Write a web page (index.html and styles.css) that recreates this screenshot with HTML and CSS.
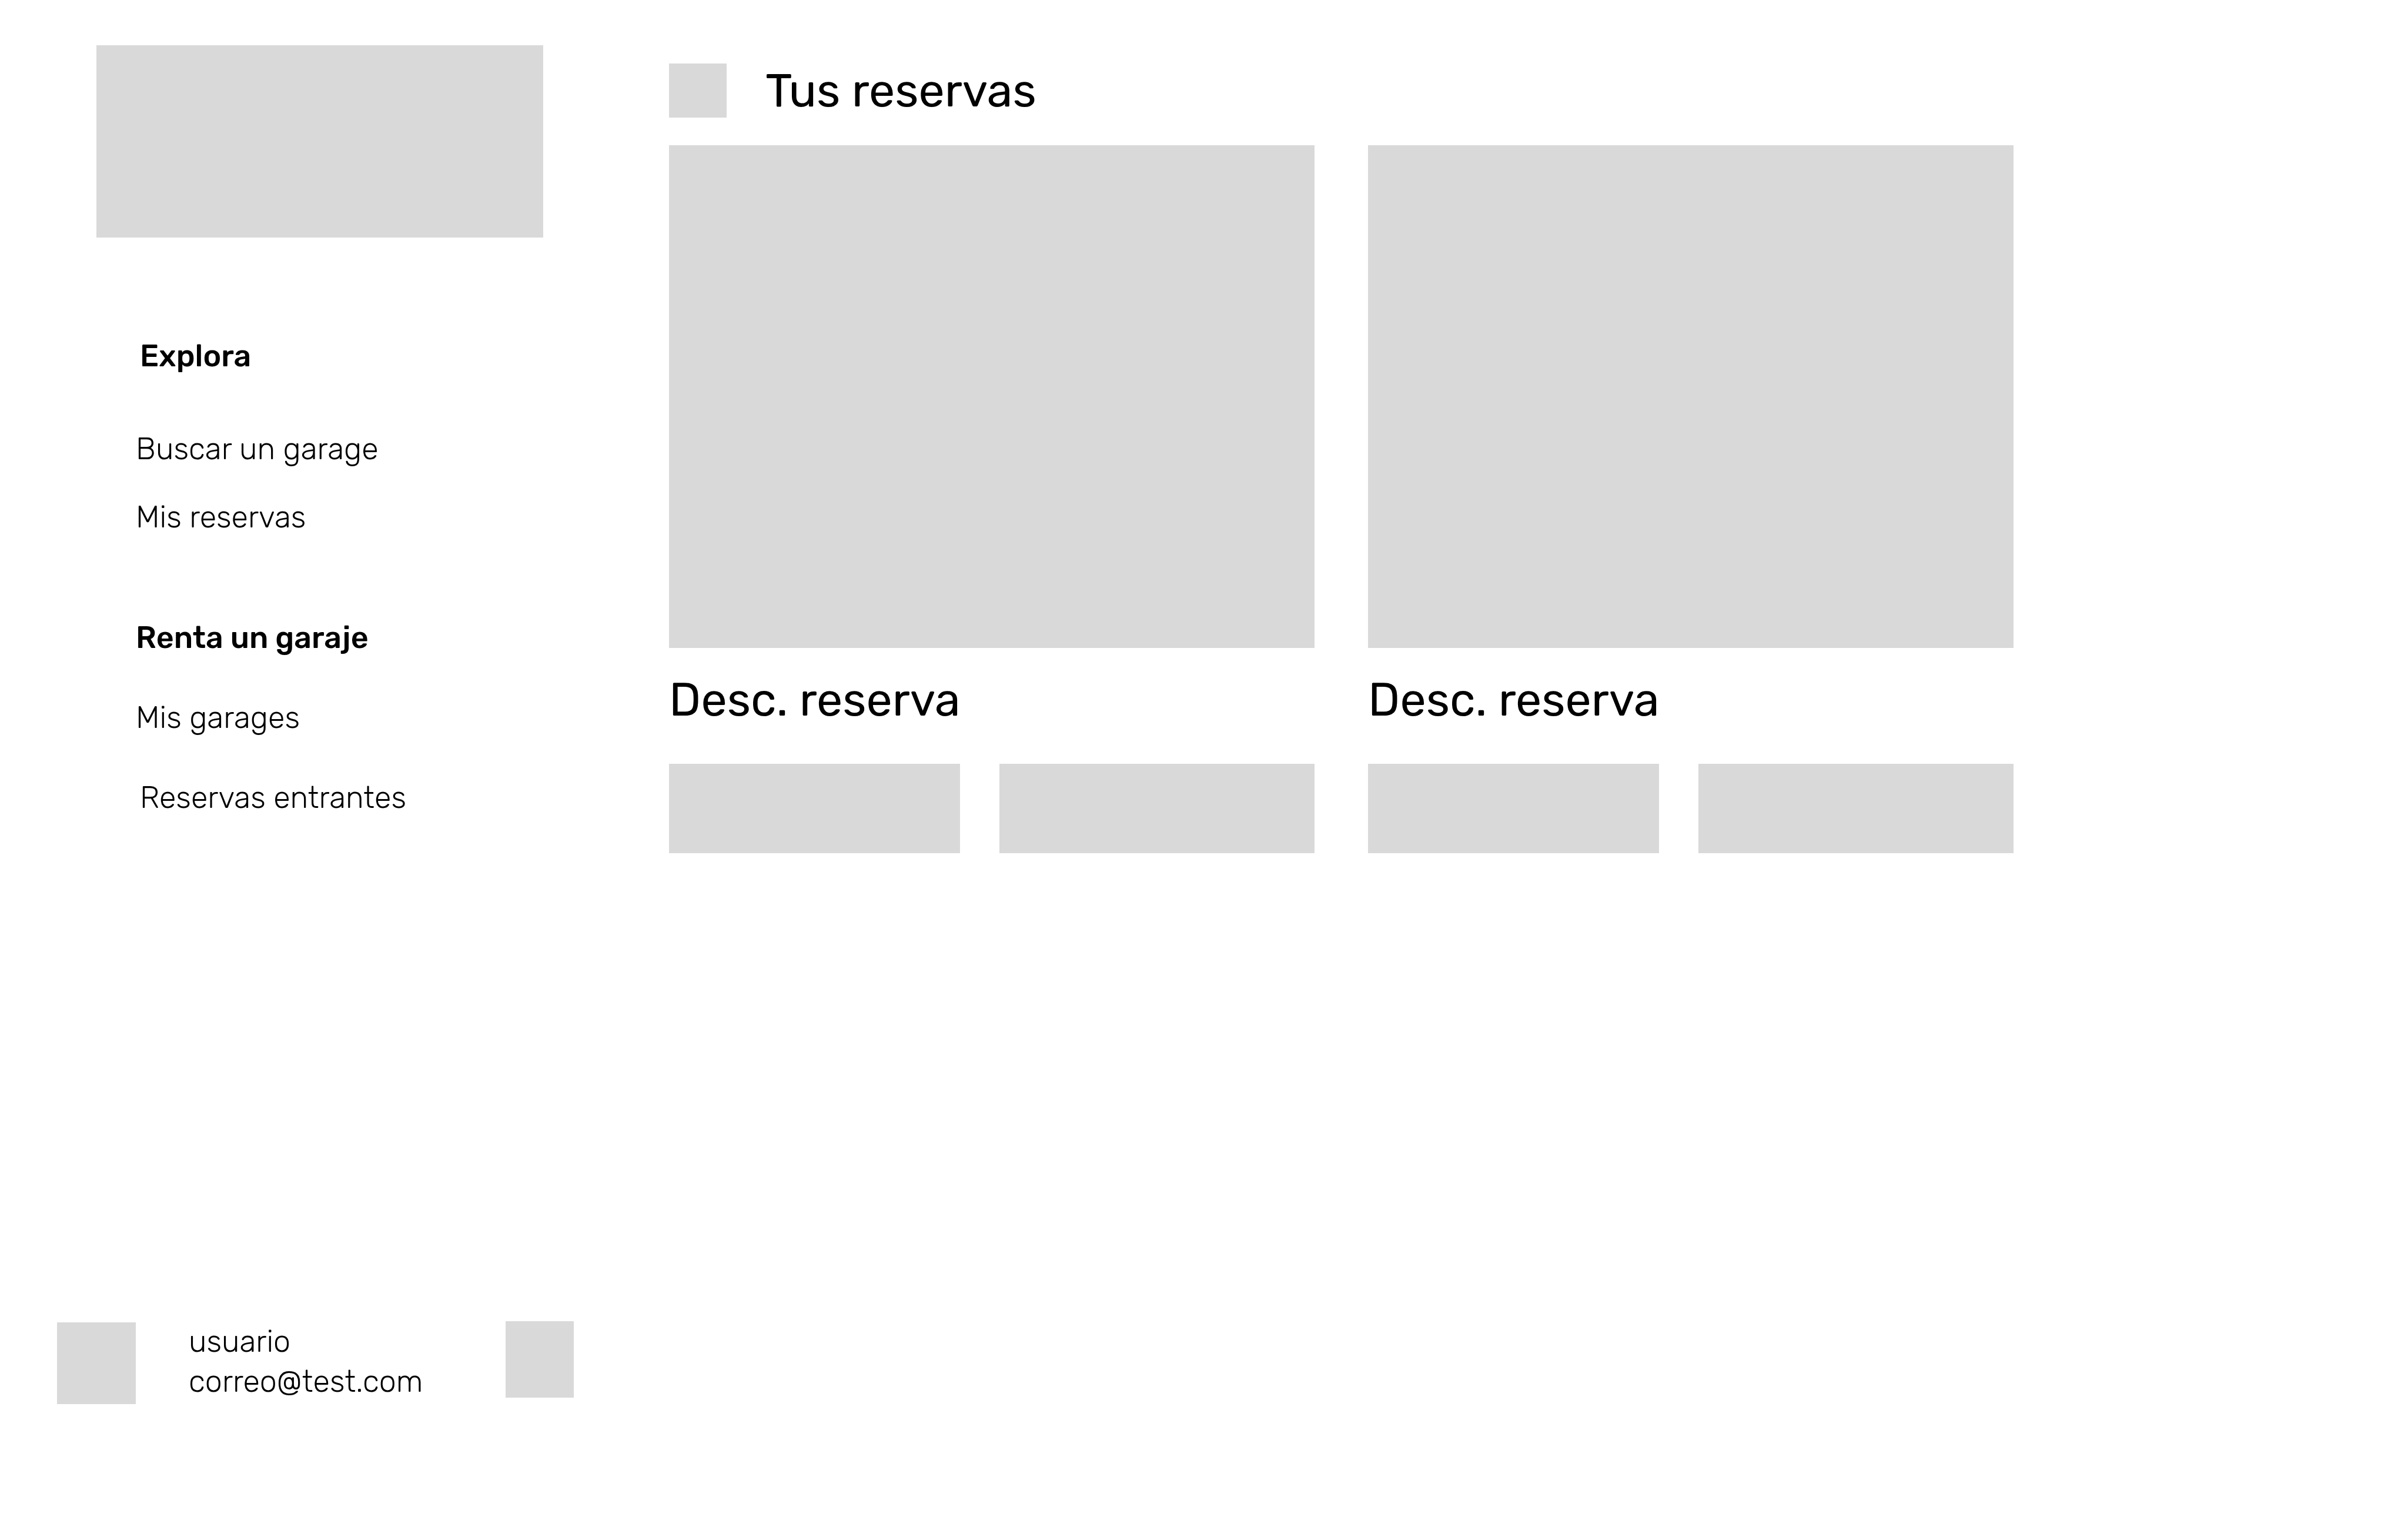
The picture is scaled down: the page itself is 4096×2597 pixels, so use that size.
FILE: index.html
```html
<!DOCTYPE html>
<html lang="es">
<head>
<meta charset="utf-8">
<meta name="viewport" content="width=device-width, initial-scale=1">
<title>Tus reservas</title>
<link rel="stylesheet" href="styles.css">
</head>
<body>
<div class="layout">
  <aside class="sidebar">
    <div class="logo"></div>
    <nav class="menu">
      <section class="menu-group">
        <h2 class="menu-title menu-inset">Explora</h2>
        <ul class="menu-list">
          <li><a class="menu-link" href="#buscar">Buscar un garage</a></li>
          <li><a class="menu-link" href="#reservas">Mis reservas</a></li>
        </ul>
      </section>
      <section class="menu-group menu-group-rent">
        <h2 class="menu-title">Renta un garaje</h2>
        <ul class="menu-list">
          <li><a class="menu-link" href="#garages">Mis garages</a></li>
          <li><a class="menu-link menu-inset" href="#entrantes">Reservas entrantes</a></li>
        </ul>
      </section>
    </nav>
    <footer class="account">
      <div class="avatar"></div>
      <div class="account-text">
        <p class="account-line">usuario</p>
        <p class="account-line">correo@test.com</p>
      </div>
      <button class="account-button" type="button" aria-label="Opciones de la cuenta"></button>
    </footer>
  </aside>
  <main class="content">
    <header class="page-header">
      <div class="page-icon"></div>
      <h1 class="page-title">Tus reservas</h1>
    </header>
    <div class="cards">
      <article class="card">
        <div class="card-photo"></div>
        <h2 class="card-title">Desc. reserva</h2>
        <div class="card-actions">
          <button class="card-button" type="button" aria-label="Ver reserva"></button>
          <button class="card-button" type="button" aria-label="Cancelar reserva"></button>
        </div>
      </article>
      <article class="card">
        <div class="card-photo"></div>
        <h2 class="card-title">Desc. reserva</h2>
        <div class="card-actions">
          <button class="card-button" type="button" aria-label="Ver reserva"></button>
          <button class="card-button" type="button" aria-label="Cancelar reserva"></button>
        </div>
      </article>
    </div>
  </main>
</div>
</body>
</html>
```
FILE: styles.css
```css
* {
  box-sizing: border-box;
}

body,
h1,
h2,
p,
ul {
  margin: 0;
  padding: 0;
}

body {
  background: #fff;
  color: #000;
  font-family: Rubik, Roboto, "Liberation Sans", sans-serif;
  font-size: 52px;
  font-weight: 300;
  line-height: 62px;
}

button {
  border: 0;
  padding: 0;
  background: #d9d9d9;
}

.layout {
  display: grid;
  grid-template-columns: 1fr 3fr;
  min-height: 100vh;
}

/* Sidebar */
.sidebar {
  display: flex;
  flex-direction: column;
  padding-top: 77px;
  padding-bottom: 209px;
}

.logo {
  height: 327px;
  margin: 0 100px 0 164px;
  background: #d9d9d9;
}

.menu {
  padding: 170px 100px 0 231px;
}

.menu-group-rent {
  padding-top: 143px;
}

.menu-title {
  font-size: 52px;
  font-weight: 500;
}

.menu-inset {
  padding-left: 7px;
}

.menu-list {
  display: flex;
  flex-direction: column;
  gap: 54px;
  padding-top: 96px;
  list-style: none;
}

.menu-group-rent .menu-list {
  gap: 74px;
  padding-top: 74px;
}

.menu-link {
  display: block;
  color: inherit;
  text-decoration: none;
}

.account {
  display: flex;
  align-items: flex-start;
  min-height: 141px;
  margin-top: auto;
  padding: 0 48px 0 97px;
}

.avatar {
  align-self: flex-end;
  width: 134px;
  height: 139px;
  background: #d9d9d9;
}

.account-text {
  flex: 1;
  padding-left: 90px;
}

.account-line {
  line-height: 68px;
}

.account-button {
  width: 116px;
  height: 130px;
}

/* Reservations */
.content {
  padding: 107px 671px 0 114px;
}

.page-header {
  display: flex;
  align-items: center;
  gap: 66px;
  padding-bottom: 46px;
}

.page-icon {
  width: 98px;
  height: 92px;
  background: #d9d9d9;
}

.page-title,
.card-title {
  font-size: 79px;
  font-weight: 400;
  line-height: 94px;
}

.cards {
  display: grid;
  grid-template-columns: 1fr 1fr;
  gap: 91px;
}

.card-photo {
  aspect-ratio: 1098 / 855;
  background: #d9d9d9;
}

.card-title {
  padding-top: 41px;
  padding-bottom: 62px;
}

.card-actions {
  display: grid;
  grid-template-columns: 495fr 536fr;
  gap: 67px;
}

.card-button {
  height: 152px;
}
```
